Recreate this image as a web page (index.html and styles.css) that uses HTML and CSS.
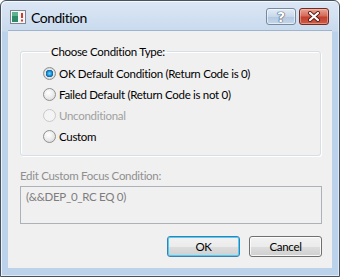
FILE: index.html
```html
<!DOCTYPE html>
<html>
<head>
<meta charset="utf-8">
<link rel="stylesheet" href="styles.css">
</head>
<body>
<div class="window">
  <div class="titlebar">
    <svg class="app-icon" width="16" height="14" viewBox="0 0 16 14">
      <rect x="0.5" y="0.5" width="15" height="13" fill="#f4f6f8" stroke="#7d8590"/>
      <rect x="2" y="2" width="6" height="10" fill="#2f8a6a"/>
      <rect x="2" y="2" width="6" height="4" fill="#5fb08c"/>
      <rect x="11" y="3" width="2" height="5" fill="#d23a2a"/>
      <rect x="11" y="9.5" width="2" height="2" fill="#d23a2a"/>
    </svg>
    <span class="title">Condition</span>
    <div class="caption-buttons">
      <div class="cap-btn help"><span class="help-mark">?</span></div>
      <div class="cap-btn close">
        <svg width="14" height="11" viewBox="0 0 14 11">
          <path d="M3 2 L11 9 M11 2 L3 9" stroke="#5a1c14" stroke-width="4" stroke-linecap="round"/>
          <path d="M3 2 L11 9 M11 2 L3 9" stroke="#ffffff" stroke-width="2.2" stroke-linecap="round"/>
        </svg>
      </div>
    </div>
  </div>
  <div class="client">
    <fieldset class="group">
      <legend>Choose Condition Type:</legend>
      <label class="option"><input type="radio" name="c" checked><span>OK Default Condition (Return Code is 0)</span></label>
      <label class="option"><input type="radio" name="c"><span>Failed Default (Return Code is not 0)</span></label>
      <label class="option disabled"><input type="radio" name="c" disabled><span>Unconditional</span></label>
      <label class="option"><input type="radio" name="c"><span>Custom</span></label>
    </fieldset>
    <div class="field-label">Edit Custom Focus Condition:</div>
    <div class="textbox">(&amp;&amp;DEP_0_RC EQ 0)</div>
    <div class="buttons">
      <div class="btn default">OK</div>
      <div class="btn">Cancel</div>
    </div>
  </div>
</div>
</body>
</html>
```
FILE: styles.css
```css
html, body {
  margin: 0;
  padding: 0;
  background: #ffffff;
}
body {
  font-family: Lato, "Noto Sans", sans-serif;
  font-size: 11.5px;
  letter-spacing: -0.3px;
  color: #000;
}
.window {
  width: 340px;
  height: 277px;
  box-sizing: border-box;
  border: 1px solid #46525f;
  border-radius: 6px 6px 0 0;
  background: linear-gradient(#dce7f4 0px, #c9daee 30px, #bcd2ea 31px, #bcd2ea 100%);
  display: flex;
  flex-direction: column;
  box-shadow: inset 1px 1px 0 rgba(255,255,255,0.7), inset -1px -1px 0 rgba(255,255,255,0.5);
}
.titlebar {
  height: 29px;
  display: flex;
  align-items: center;
  padding: 0 10px 0 9px;
}
.app-icon {
  margin-top: 3px;
  flex: none;
}
.title {
  margin-left: 5px;
  font-size: 14px;
  letter-spacing: -0.5px;
  margin-top: 4px;
  color: #000;
}
.caption-buttons {
  margin-left: auto;
  display: flex;
  gap: 3px;
  margin-top: 2px;
}
.cap-btn {
  width: 30px;
  height: 17px;
  box-sizing: border-box;
  border-radius: 3px;
  display: flex;
  align-items: center;
  justify-content: center;
}
.help {
  border: 1px solid #7689a0;
  background: linear-gradient(#e3ecf6 0%, #c8d8ea 50%, #b3c8e0 51%, #c4d6ea 100%);
  box-shadow: inset 0 0 0 1px rgba(255,255,255,0.55);
}
.help-mark {
  font-family: "DejaVu Sans", sans-serif;
  font-weight: bold;
  font-size: 14px;
  letter-spacing: 0;
  color: #ffffff;
  line-height: 1;
  text-shadow: 0 0 1px #3d4d62, 0 0 1px #3d4d62, 0 0 1px #3d4d62;
}
.close {
  border: 1px solid #6f2a22;
  background: linear-gradient(#e8a596 0%, #d66b5a 45%, #c2402d 55%, #cf5b47 100%);
  box-shadow: inset 0 0 0 1px rgba(255,210,200,0.45);
}
.client {
  flex: 1;
  margin: 0 7px 8px 7px;
  background: #f0f0f0;
  border-top: 1px solid #9cb4cf;
  padding: 13px 10px 0 12px;
  display: flex;
  flex-direction: column;
}
.group {
  margin: 0 1px 0 0;
  padding: 4px 0 8px 22px;
  border: 1px solid #d5dfe5;
  border-radius: 3px;
  box-shadow: inset 1px 1px 0 #ffffff, 1px 1px 0 #ffffff;
  display: flex;
  flex-direction: column;
}
.group legend {
  padding: 0 2px;
  margin-left: 6px;
  line-height: 15px;
  color: #000;
}
.option {
  height: 21px;
  display: flex;
  align-items: center;
  line-height: 15px;
}
.option input {
  appearance: none;
  -webkit-appearance: none;
  margin: 0 3px 0 0;
  width: 13px;
  height: 13px;
  box-sizing: border-box;
  border-radius: 50%;
  border: 1px solid #8e8f8f;
  background: radial-gradient(circle at 40% 35%, #ffffff 0%, #f2f2f2 35%, #d4d4d4 100%);
  flex: none;
}
.option input:checked {
  background: radial-gradient(circle at 50% 50%, #6fd6ff 0px, #1f9be0 2px, #0e5f9c 3.5px, #e9e9e9 4px, #cfcfcf 6px);
}
.option.disabled {
  color: #a0a0a0;
}
.option.disabled input {
  border-color: #c9c9c9;
  background: #f4f4f4;
}
.field-label {
  margin-top: 12px;
  line-height: 15px;
  color: #8f8f8f;
}
.textbox {
  margin-top: 3px;
  height: 38px;
  box-sizing: border-box;
  border: 1px solid #adb2b8;
  padding: 2px 5px;
  line-height: 15px;
  color: #7d7d7d;
  background: #f0f0f0;
}
.buttons {
  margin-top: 12px;
  display: flex;
  justify-content: flex-end;
  gap: 9px;
}
.btn {
  width: 73px;
  height: 21px;
  box-sizing: border-box;
  border: 1px solid #707070;
  border-radius: 3px;
  background: linear-gradient(#f2f2f2 0%, #ebebeb 50%, #dddddd 51%, #cfcfcf 100%);
  box-shadow: inset 0 0 0 1px rgba(255,255,255,0.8);
  display: flex;
  align-items: center;
  justify-content: center;
  line-height: 15px;
}
.btn.default {
  border-color: #3c7fb1;
  box-shadow: inset 0 0 0 1px #48d0f9;
}
```
